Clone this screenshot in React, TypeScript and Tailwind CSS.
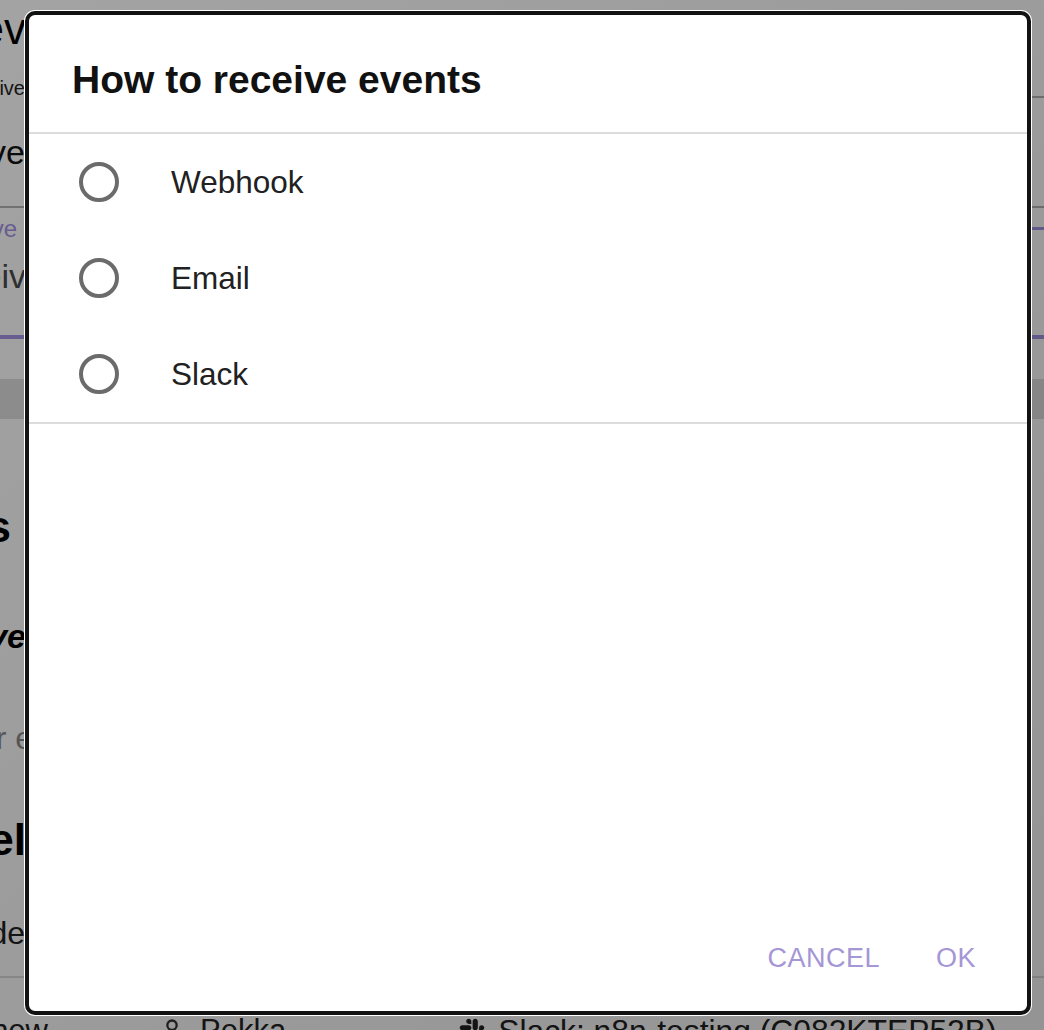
import { User } from "lucide-react";
import { FaSlack } from "react-icons/fa";

const options = ["Webhook", "Email", "Slack"];

// text whose end sits at the dialog's left edge; the rest runs off the page
function Frag({ children, className = "" }: { children: React.ReactNode; className?: string }) {
  return <div className={`flex justify-end whitespace-nowrap ${className}`}>{children}</div>;
}

export default function App() {
  return (
    <div className="relative h-[1030px] w-full overflow-hidden bg-white font-['Liberation_Sans',Arial,sans-serif]">
      {/* page behind the dialog */}
      <div className="flex flex-col">
        <div className="flex h-[98px]">
          <div className="flex w-[520px] flex-col">
            <Frag className="w-[26px] pt-[4px] text-[44px] leading-[50px] text-black">Rev</Frag>
            <Frag className="mt-[22px] w-[25px] text-[20px] leading-[24px] text-[#222]">Receive</Frag>
          </div>
          <div className="flex-1 border-b-2 border-[#b3b3b3]" />
        </div>

        <div className="h-[110px] border-b-2 border-[#b3b3b3] pt-[34px]">
          <Frag className="w-[25px] text-[34px] leading-[40px] text-[#111]">Receive</Frag>
        </div>

        <div className="flex h-[131px] border-b-4 border-[#a393e4]">
          <div className="flex w-[520px] flex-col pt-[7px]">
            <Frag className="w-[17px] text-[24px] leading-[28px] text-[#a393e4]">Receive</Frag>
            <Frag className="mt-[13px] w-[26px] text-[34px] leading-[40px] text-[#4a4a4a]">Receiv</Frag>
          </div>
          <div className="flex-1 pt-[19px]">
            <div className="h-[3px] bg-[#a393e4]" />
          </div>
        </div>

        <div className="h-[40px]" />
        <div className="h-[40px] bg-[#dfdfdf]" />

        <div className="flex h-[559px] flex-col border-b-2 border-[#dcdcdc] pt-[83px]">
          <Frag className="w-[11px] text-[44px] font-bold leading-[50px] text-black">Events</Frag>
          <Frag className="mt-[64px] w-[26px] text-[34px] font-bold italic leading-[40px] text-black">Receive</Frag>
          <Frag className="mt-[62px] w-[33px] text-[32px] leading-[40px] text-[#8a8a8a]">Your e</Frag>
          <Frag className="mt-[57px] w-[26px] text-[44px] font-bold leading-[50px] text-black">Channel</Frag>
          <Frag className="mt-[48px] w-[25px] text-[32px] leading-[40px] text-[#222]">Node</Frag>
        </div>

        <div className="flex items-center pt-[35px] text-[31px] leading-[36px] text-[#222]">
          <Frag className="w-[48px]">new</Frag>
          <div className="ml-[110px] flex items-center gap-[14px]">
            <User className="h-[28px] w-[28px] text-[#333]" strokeWidth={2} />
            <span>Pekka</span>
          </div>
          <div className="ml-[172px] flex items-center gap-[12px]">
            <FaSlack className="h-[28px] w-[28px] text-[#222]" />
            <span className="text-[31.8px]">Slack: n8n-testing (C082KTEP52B)</span>
          </div>
        </div>
      </div>

      {/* backdrop */}
      <div className="absolute inset-0 bg-linear-to-br from-black/[0.36] to-black/[0.42]" />

      {/* dialog */}
      <div className="absolute left-[25px] top-[11px] flex h-[1004px] w-[1006px] flex-col rounded-[10px] border-4 border-[#121212] bg-white ring-1 ring-white">
        <div className="pb-[28px] pl-[43px] pt-[41px] text-[39px] font-semibold leading-[48px] text-[#111]">
          How to receive events
        </div>
        <div className="border-t-2 border-[#dcdcdc]" />
        <div className="flex flex-col">
          {options.map((o) => (
            <label key={o} className="flex h-[96px] items-center pl-[50px]">
              <span className="h-[40px] w-[40px] rounded-full border-4 border-[#6b6b6b]" />
              <span className="ml-[52px] text-[31.5px] leading-[36px] text-[#212121]">{o}</span>
            </label>
          ))}
        </div>
        <div className="border-t-2 border-[#dcdcdc]" />
        <div className="flex-1" />
        <div className="flex justify-end gap-[56px] pb-[37px] pr-[51px] text-[27px] font-medium leading-[32px] tracking-[0.5px] text-[#a596d6]">
          <button>CANCEL</button>
          <button>OK</button>
        </div>
      </div>
    </div>
  );
}
